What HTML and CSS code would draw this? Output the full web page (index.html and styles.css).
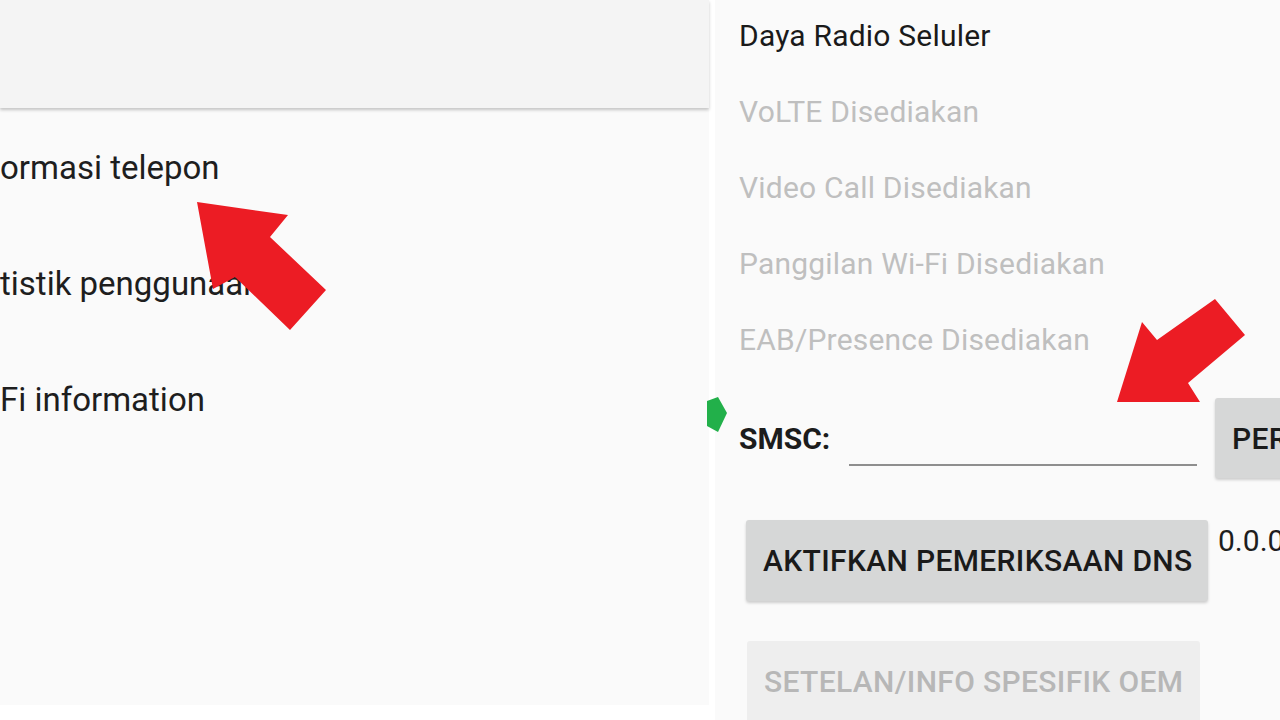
FILE: index.html
```html
<!DOCTYPE html>
<html lang="id">
<head>
<meta charset="utf-8">
<title>Informasi telepon</title>
<link rel="stylesheet" href="styles.css">
</head>
<body>
<div class="screen">
  <section class="left">
    <header class="appbar"></header>
    <ul class="menu">
      <li class="menu-item">ormasi telepon</li>
      <li class="menu-item">tistik penggunaan</li>
      <li class="menu-item">Fi information</li>
    </ul>
  </section>
  <section class="right">
    <ul class="status">
      <li class="status-item">Daya Radio Seluler</li>
      <li class="status-item is-off">VoLTE Disediakan</li>
      <li class="status-item is-off">Video Call Disediakan</li>
      <li class="status-item is-off">Panggilan Wi-Fi Disediakan</li>
      <li class="status-item is-off">EAB/Presence Disediakan</li>
    </ul>
    <div class="smsc-row">
      <span class="smsc-label">SMSC:</span>
      <span class="smsc-input"></span>
      <button class="btn btn-refresh">PERBARUI</button>
    </div>
    <div class="dns-row">
      <button class="btn btn-dns">AKTIFKAN PEMERIKSAAN DNS</button>
      <span class="dns-value">0.0.0.0</span>
    </div>
    <div class="oem-row">
      <button class="btn btn-oem">SETELAN/INFO SPESIFIK OEM</button>
    </div>
  </section>
  <svg class="overlay" width="1280" height="720" viewBox="0 0 1280 720" aria-hidden="true">
    <polygon class="red" points="197,202 288,215 270,237 326,290 290,330 235,277 213,289"/>
    <polygon class="red" points="1117,402 1142,322 1157,340 1215,299 1245,335 1188,383 1200,402"/>
    <polygon class="green" points="707,401 718,397 727,413 718,432 707,426"/>
  </svg>
</div>
</body>
</html>
```
FILE: styles.css
```css
* { box-sizing: border-box; }
html, body {
  margin: 0;
  padding: 0;
  background: #ffffff;
}
body {
  font-family: Roboto, "Noto Sans", "Liberation Sans", sans-serif;
  color: #1c1c1c;
}
.screen {
  position: relative;
  width: 1280px;
  height: 720px;
  overflow: hidden;
  display: flex;
  gap: 6px;
}
.left {
  width: 709px;
  height: 705px;
  background: #fafafa;
  display: flex;
  flex-direction: column;
  flex: none;
}
.appbar {
  height: 108px;
  background: #f4f4f4;
  box-shadow: 0 2px 3px rgba(0, 0, 0, 0.22);
  position: relative;
  z-index: 1;
  flex: none;
}
.menu {
  list-style: none;
  margin: 2px 0 0;
  padding: 0;
}
.menu-item {
  height: 116px;
  line-height: 116px;
  font-size: 33px;
  white-space: nowrap;
  color: #1e1e1e;
}
.right {
  flex: 1;
  height: 720px;
  background: #fafafa;
  padding-left: 24px;
  overflow: hidden;
  display: flex;
  flex-direction: column;
}
.status {
  list-style: none;
  margin: -2px 0 0;
  padding: 0;
}
.status-item {
  height: 76px;
  line-height: 76px;
  font-size: 30px;
  letter-spacing: 0.2px;
  white-space: nowrap;
  color: #1a1a1a;
}
.status-item.is-off { color: #bfbfbf; }
.smsc-row {
  margin-top: 20px;
  height: 80px;
  display: flex;
  align-items: center;
  flex: none;
}
.smsc-label {
  font-size: 30px;
  font-weight: 700;
  width: 110px;
  flex: none;
}
.smsc-input {
  width: 348px;
  align-self: stretch;
  margin-bottom: 12px;
  border-bottom: 2px solid #8e8e8e;
  flex: none;
}
.btn {
  font-family: Roboto, "Noto Sans", "Liberation Sans", sans-serif;
  font-size: 30px;
  font-weight: 500;
  letter-spacing: 0.35px;
  border: none;
  border-radius: 3px;
  background: #d6d7d7;
  color: #1a1a1a;
  white-space: nowrap;
  padding: 0 17px;
  box-shadow: 0 2px 3px rgba(0, 0, 0, 0.18);
  flex: none;
}
.btn-refresh {
  margin-left: 18px;
  height: 80px;
  width: 200px;
  text-align: left;
}
.dns-row {
  margin-top: 42px;
  display: flex;
  align-items: flex-start;
  flex: none;
}
.btn-dns {
  margin-left: 7px;
  width: 462px;
  height: 81px;
  text-align: center;
}
.dns-value {
  margin-left: 10px;
  font-size: 30px;
  line-height: 42px;
  white-space: nowrap;
  color: #1e1e1e;
}
.oem-row {
  margin-top: 40px;
  display: flex;
  flex: none;
}
.btn-oem {
  margin-left: 8px;
  width: 453px;
  height: 82px;
  padding-bottom: 2px;
  background: #eeeeee;
  color: #b7b7b7;
  box-shadow: none;
  text-align: center;
}
.overlay {
  position: absolute;
  left: 0;
  top: 0;
  pointer-events: none;
}
.red { fill: #ec1c24; }
.green { fill: #22b04a; }
```
